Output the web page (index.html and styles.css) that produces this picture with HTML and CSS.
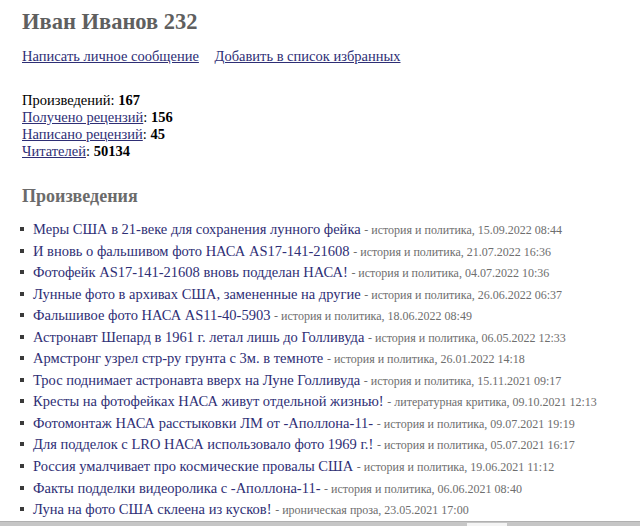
FILE: index.html
```html
<!DOCTYPE html>
<html lang="ru">
<head>
    <meta charset="UTF-8">
    <title>Иван Иванов 232</title>
    <link rel="stylesheet" href="styles.css">
</head>
<body>
    <div class="main">
        <h1 class="author">Иван Иванов 232</h1>

        <div class="actions">
            <a href="#">Написать личное сообщение</a>
            <a href="#">Добавить в список избранных</a>
        </div>

        <div class="stats">
            <div>Произведений: <b>167</b></div>
            <div><a href="#">Получено рецензий</a>: <b>156</b></div>
            <div><a href="#">Написано рецензий</a>: <b>45</b></div>
            <div><a href="#">Читателей</a>: <b>50134</b></div>
        </div>

        <h2 class="section">Произведения</h2>

        <ul class="works">
            <li><a href="#">Меры США в 21-веке для сохранения лунного фейка</a> <small>- история и политика, 15.09.2022 08:44</small></li>
            <li><a href="#">И вновь о фальшивом фото НАСА AS17-141-21608</a> <small>- история и политика, 21.07.2022 16:36</small></li>
            <li><a href="#">Фотофейк AS17-141-21608 вновь подделан НАСА!</a> <small>- история и политика, 04.07.2022 10:36</small></li>
            <li><a href="#">Лунные фото в архивах США, замененные на другие</a> <small>- история и политика, 26.06.2022 06:37</small></li>
            <li><a href="#">Фальшивое фото НАСА AS11-40-5903</a> <small>- история и политика, 18.06.2022 08:49</small></li>
            <li><a href="#">Астронавт Шепард в 1961 г. летал лишь до Голливуда</a> <small>- история и политика, 06.05.2022 12:33</small></li>
            <li><a href="#">Армстронг узрел стр-ру грунта с 3м. в темноте</a> <small>- история и политика, 26.01.2022 14:18</small></li>
            <li><a href="#">Трос поднимает астронавта вверх на Луне Голливуда</a> <small>- история и политика, 15.11.2021 09:17</small></li>
            <li><a href="#">Кресты на фотофейках НАСА живут отдельной жизнью!</a> <small>- литературная критика, 09.10.2021 12:13</small></li>
            <li><a href="#">Фотомонтаж НАСА расстыковки ЛМ от -Аполлона-11-</a> <small>- история и политика, 09.07.2021 19:19</small></li>
            <li><a href="#">Для подделок с LRO НАСА использовало фото 1969 г.!</a> <small>- история и политика, 05.07.2021 16:17</small></li>
            <li><a href="#">Россия умалчивает про космические провалы США</a> <small>- история и политика, 19.06.2021 11:12</small></li>
            <li><a href="#">Факты подделки видеоролика с -Аполлона-11-</a> <small>- история и политика, 06.06.2021 08:40</small></li>
            <li><a href="#">Луна на фото США склеена из кусков!</a> <small>- ироническая проза, 23.05.2021 17:00</small></li>
            <li><a href="#">Лайка и НАСА - две стороны одного фейка</a> <small>- история и политика, 01.05.2021 10:00</small></li>
        </ul>
    </div>

    <!-- window status strip along the bottom edge -->
    <div class="status-bar"><span class="status-box"></span></div>
</body>
</html>
```

FILE: styles.css
```css
body {
    font-family: "Liberation Serif", "Times New Roman", serif;
    background-color: #ffffff;
    color: #000000;
    margin: 0;
    padding: 0;
}

.main {
    padding: 9px 22px 0 22px;
}

a {
    color: #2e2e75;
}

.author {
    font-size: 22.5px;
    font-weight: bold;
    color: #5f5f5f;
    margin: 0;
    line-height: 26px;
}

.actions {
    margin-top: 12px;
    font-size: 14.5px;
    line-height: 18px;
}

.actions a {
    margin-right: 12px;
}

.stats {
    margin-top: 27px;
    font-size: 14.5px;
    line-height: 17px;
}

.section {
    font-size: 18px;
    font-weight: bold;
    color: #6b6b6b;
    margin: 25px 0 0 0;
    line-height: 22px;
}

.works {
    list-style: none;
    margin: 12px 0 0 0;
    padding: 0;
}

.works li {
    font-size: 14.5px;
    line-height: 21.55px;
    color: #6e6e6e;
}

/* small square bullet in front of each title */
.works li::before {
    content: "";
    display: inline-block;
    width: 4px;
    height: 4px;
    background-color: #3a3a3a;
    margin: 0 9px 0 -2px;
    vertical-align: 3px;
}

.works a {
    text-decoration: none;
}

.works small {
    font-size: 12px;
    line-height: 1;
    color: #6e6e6e;
}

.status-bar {
    position: fixed;
    left: 0;
    right: 0;
    bottom: 0;
    height: 4px;
    background-color: #c6c6c6;
    border-top: 1px solid #b0b0b0;
}

.status-box {
    position: absolute;
    left: 467px;
    top: 1px;
    width: 40px;
    height: 3px;
    background-color: #f4f4f4;
}
```
